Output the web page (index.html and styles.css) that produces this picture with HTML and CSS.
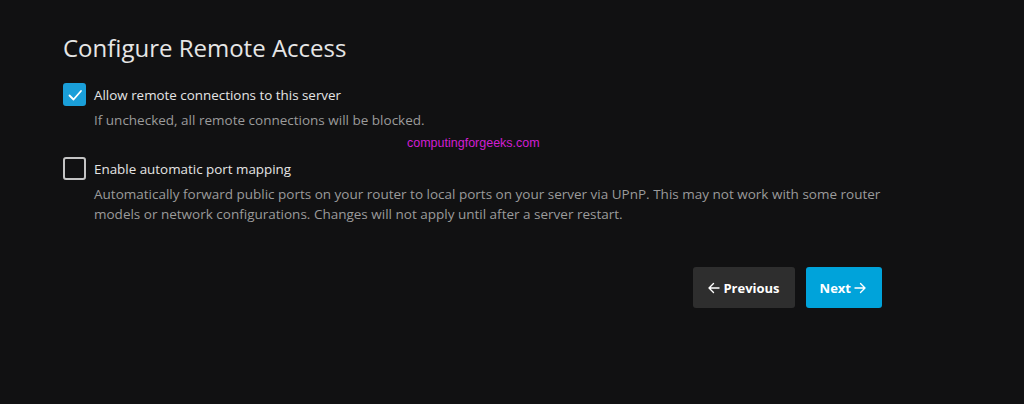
FILE: index.html
```html
<!DOCTYPE html>
<html lang="en">
<head>
    <meta charset="UTF-8">
    <meta name="viewport" content="width=device-width, initial-scale=1.0">
    <title>Configure Remote Access</title>
    <link rel="stylesheet" href="styles.css">
</head>
<body>

    <div class="setup">
        <h1>Configure Remote Access</h1>

        <div class="option">
            <span class="checkbox checked">
                <svg width="16" height="16" viewBox="0 0 16 16"><path d="M2.5 8.5 L6.5 12.5 L14 4" fill="none" stroke="#fff" stroke-width="1.8" stroke-linecap="round" stroke-linejoin="round"/></svg>
            </span>
            <div class="option-text">
                <div class="label">Allow remote connections to this server</div>
                <div class="hint">If unchecked, all remote connections will be blocked.</div>
            </div>
        </div>

        <div class="watermark">computingforgeeks.com</div>

        <div class="option">
            <span class="checkbox"></span>
            <div class="option-text">
                <div class="label">Enable automatic port mapping</div>
                <div class="hint">Automatically forward public ports on your router to local ports on your server via UPnP. This may not work with some router models or network configurations. Changes will not apply until after a server restart.</div>
            </div>
        </div>

        <div class="actions">
            <button class="btn btn-prev">
                <svg width="14" height="14" viewBox="0 0 14 14"><path d="M12 7 H2 M6.5 2.5 L2 7 L6.5 11.5" fill="none" stroke="#fff" stroke-width="1.4" stroke-linecap="round" stroke-linejoin="round"/></svg>
                Previous
            </button>
            <button class="btn btn-next">
                Next
                <svg width="14" height="14" viewBox="0 0 14 14"><path d="M2 7 H12 M7.5 2.5 L12 7 L7.5 11.5" fill="none" stroke="#fff" stroke-width="1.4" stroke-linecap="round" stroke-linejoin="round"/></svg>
            </button>
        </div>
    </div>

</body>
</html>
```

FILE: styles.css
```css
body {
    margin: 0;
    background-color: #111112;
    font-family: 'Open Sans', sans-serif;
    color: #e5e5e5;
}
.setup {
    width: 819px;
    margin-left: 63px;
    padding-top: 30px;
}
h1 {
    margin: 0 0 17px;
    font-size: 24px;
    font-weight: 400;
    line-height: 36px;
    color: #e6e6e6;
}
.option {
    display: flex;
    align-items: flex-start;
    gap: 8px;
}
.checkbox {
    flex: none;
    box-sizing: border-box;
    width: 23px;
    height: 23px;
    border: 2px solid #c4c4c4;
    border-radius: 3px;
    display: flex;
    align-items: center;
    justify-content: center;
}
.checkbox.checked {
    background-color: #1a9fd9;
    border-color: #1a9fd9;
}
.label {
    font-size: 13.4px;
    line-height: 25px;
    color: #e5e5e5;
}
.hint {
    margin-top: 2px;
    font-size: 13.5px;
    line-height: 20px;
    color: #9b9b9b;
}
.watermark {
    font-family: 'Liberation Sans', Arial, sans-serif;
    font-size: 12.5px;
    color: #d21ed2;
    margin: 4px 0 5px 344px;
    line-height: 18px;
}
.actions {
    display: flex;
    justify-content: flex-end;
    gap: 11px;
    margin-top: 43px;
}
.btn {
    display: flex;
    align-items: center;
    gap: 2px;
    height: 41px;
    border: none;
    border-radius: 3px;
    font-family: 'Open Sans', sans-serif;
    font-size: 13px;
    font-weight: 700;
    color: #fff;
    padding: 0 15px 0 14px;
}
.btn-prev {
    background-color: #2e2e2e;
}
.btn-next {
    background-color: #00a3da;
}
```
